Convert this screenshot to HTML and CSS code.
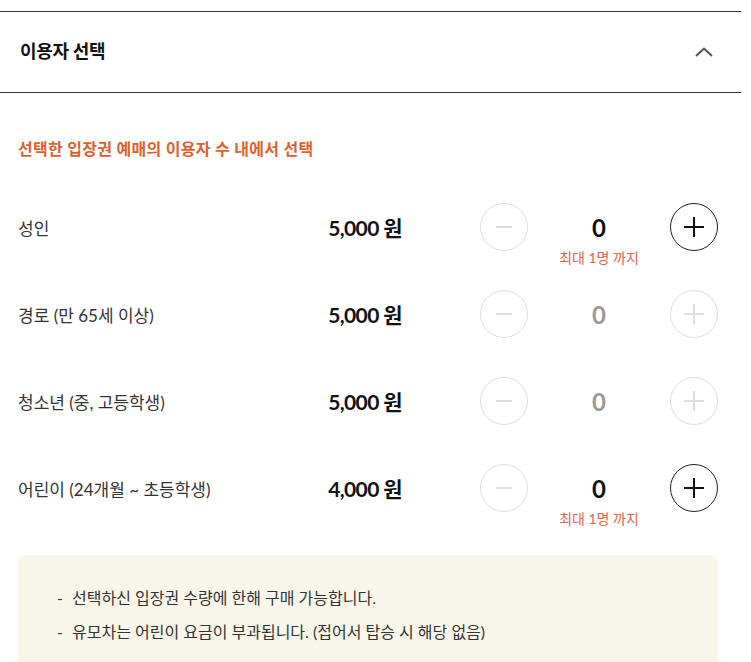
FILE: index.html
```html
<!DOCTYPE html>
<html lang="ko">
<head>
<meta charset="UTF-8">
<meta name="viewport" content="width=device-width, initial-scale=1.0">
<title>이용자 선택</title>
<link rel="stylesheet" href="styles.css">
</head>
<body>

<section class="panel">
    <div class="panel-head">
        <h2>이용자 선택</h2>
        <svg class="chevron" width="18" height="10" viewBox="0 0 18 10">
            <polyline points="1,9 9,1.5 17,9" fill="none" stroke="#555" stroke-width="2"/>
        </svg>
    </div>

    <div class="panel-body">
        <p class="guide">선택한 입장권 예매의 이용자 수 내에서 선택</p>

        <ul class="users">
            <li class="user">
                <span class="user-name">성인</span>
                <span class="user-price">5,000 원</span>
                <button class="btn minus off"><svg viewBox="0 0 20 20"><line x1="2" y1="10" x2="18" y2="10"/></svg></button>
                <span class="count">0</span>
                <button class="btn plus"><svg viewBox="0 0 20 20"><line x1="0" y1="10" x2="20" y2="10"/><line x1="10" y1="0" x2="10" y2="20"/></svg></button>
                <span class="limit">최대 1명 까지</span>
            </li>
            <li class="user">
                <span class="user-name">경로 (만 65세 이상)</span>
                <span class="user-price">5,000 원</span>
                <button class="btn minus off"><svg viewBox="0 0 20 20"><line x1="2" y1="10" x2="18" y2="10"/></svg></button>
                <span class="count off">0</span>
                <button class="btn plus off"><svg viewBox="0 0 20 20"><line x1="0" y1="10" x2="20" y2="10"/><line x1="10" y1="0" x2="10" y2="20"/></svg></button>
            </li>
            <li class="user">
                <span class="user-name">청소년 (중, 고등학생)</span>
                <span class="user-price">5,000 원</span>
                <button class="btn minus off"><svg viewBox="0 0 20 20"><line x1="2" y1="10" x2="18" y2="10"/></svg></button>
                <span class="count off">0</span>
                <button class="btn plus off"><svg viewBox="0 0 20 20"><line x1="0" y1="10" x2="20" y2="10"/><line x1="10" y1="0" x2="10" y2="20"/></svg></button>
            </li>
            <li class="user">
                <span class="user-name">어린이 (24개월 ~ 초등학생)</span>
                <span class="user-price">4,000 원</span>
                <button class="btn minus off"><svg viewBox="0 0 20 20"><line x1="2" y1="10" x2="18" y2="10"/></svg></button>
                <span class="count">0</span>
                <button class="btn plus"><svg viewBox="0 0 20 20"><line x1="0" y1="10" x2="20" y2="10"/><line x1="10" y1="0" x2="10" y2="20"/></svg></button>
                <span class="limit">최대 1명 까지</span>
            </li>
        </ul>

        <div class="notice">
            <ul>
                <li>선택하신 입장권 수량에 한해 구매 가능합니다.</li>
                <li>유모차는 어린이 요금이 부과됩니다. (접어서 탑승 시 해당 없음)</li>
            </ul>
        </div>
    </div>
</section>

</body>
</html>
```

FILE: styles.css
```css
body {
    margin: 0;
    font-family: Lato, "Noto Sans CJK KR", sans-serif;
    color: #222;
    background: #fff;
}
.panel {
    width: 741px;
    padding-top: 11px;
}
.panel-head {
    display: flex;
    align-items: center;
    justify-content: space-between;
    height: 80px;
    border-top: 1px solid #333;
    border-bottom: 1px solid #333;
    padding: 0 28px 0 20px;
}
.panel-head h2 {
    margin: 0 0 4px;
    font-size: 18px;
    font-weight: bold;
    letter-spacing: -0.3px;
    color: #111;
}
.chevron {
    display: block;
}
.panel-body {
    width: 700px;
    padding: 0 0 0 18px;
}
.guide {
    margin: 45px 0 0;
    font-size: 16px;
    line-height: 22px;
    font-weight: bold;
    letter-spacing: 0.3px;
    color: #e0602c;
}
.users {
    list-style: none;
    margin: 43px 0 0;
    padding: 0;
}
.user {
    display: grid;
    grid-template-columns: 1fr 120px 48px 142px 48px;
    grid-template-rows: 48px 39px;
    align-items: center;
}
.user-name {
    font-size: 17px;
    color: #333;
}
.user-price {
    grid-column: 2;
    justify-self: end;
    margin-right: 78px;
    font-size: 21px;
    font-weight: bold;
    letter-spacing: -0.6px;
    color: #111;
    white-space: nowrap;
}
.user .btn.minus {
    grid-column: 3;
}
.user .btn.plus {
    grid-column: 5;
}
.btn {
    display: flex;
    align-items: center;
    justify-content: center;
    width: 48px;
    height: 48px;
    padding: 0;
    border: 1px solid #222;
    border-radius: 50%;
    background: #fff;
    cursor: pointer;
}
.btn svg {
    width: 20px;
    height: 20px;
    stroke: #111;
    stroke-width: 2;
}
.btn.off {
    border-color: #ddd;
}
.btn.off svg {
    stroke: #ddd;
}
.count {
    grid-column: 4;
    text-align: center;
    font-size: 24px;
    font-weight: bold;
    color: #111;
}
.count.off {
    color: #999;
}
.limit {
    grid-column: 4;
    grid-row: 2;
    align-self: start;
    text-align: center;
    margin-top: -4px;
    font-size: 14px;
    color: #e6604a;
}
.notice {
    margin-top: 4px;
    background: #f8f5eb;
    border-radius: 8px 8px 0 0;
    padding: 26px 0 30px 39px;
}
.notice ul {
    list-style: none;
    margin: 0;
    padding: 0;
}
.notice li {
    position: relative;
    padding-left: 15px;
    font-size: 16px;
    line-height: 34px;
    color: #333;
}
.notice li::before {
    content: "-";
    position: absolute;
    left: 0;
}
```
